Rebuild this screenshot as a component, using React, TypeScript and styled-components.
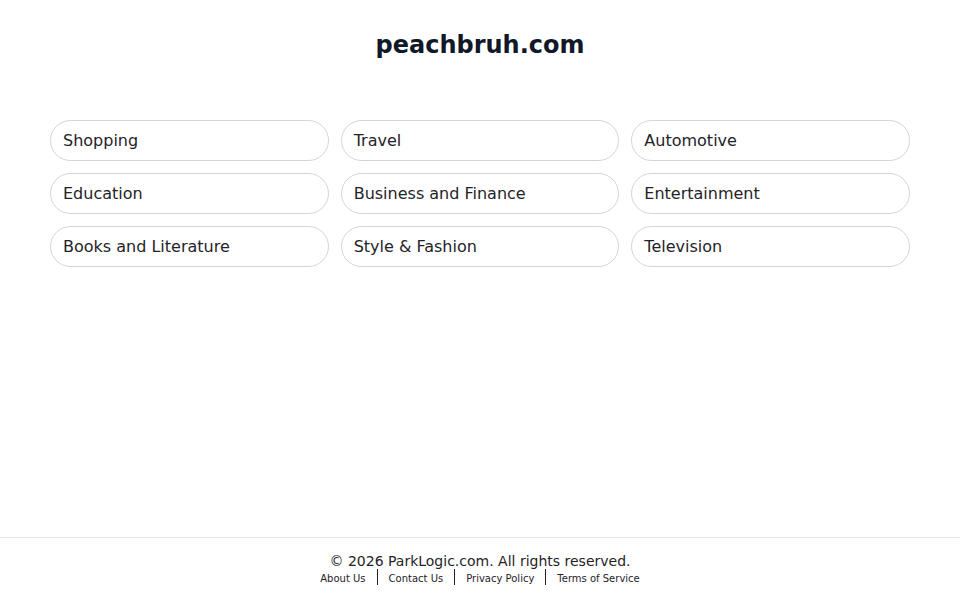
import React from "react";
import styled, { createGlobalStyle } from "styled-components";

const categories = [
  "Shopping",
  "Travel",
  "Automotive",
  "Education",
  "Business and Finance",
  "Entertainment",
  "Books and Literature",
  "Style & Fashion",
  "Television",
];

const links = ["About Us", "Contact Us", "Privacy Policy", "Terms of Service"];

function App() {
  return (
    <>
      <GlobalStyle />
      <Page>
        <Main>
          <Title>peachbruh.com</Title>
          <Grid>
            {categories.map((c) => (
              <Pill key={c} href="#">
                {c}
              </Pill>
            ))}
          </Grid>
        </Main>
        <Footer>
          <Copy>© 2026 ParkLogic.com. All rights reserved.</Copy>
          <LinkRow>
            {links.map((l, i) => (
              <React.Fragment key={l}>
                {i > 0 && <Sep />}
                <FooterLink href="#">{l}</FooterLink>
              </React.Fragment>
            ))}
          </LinkRow>
        </Footer>
      </Page>
    </>
  );
}

export default App;

const GlobalStyle = createGlobalStyle`
  html, body {
    margin: 0;
    padding: 0;
    background: #fff;
    font-family: "DejaVu Sans", Verdana, sans-serif;
  }
`;

const Page = styled.div`
  min-height: 100vh;
  display: flex;
  flex-direction: column;
`;

const Main = styled.main`
  flex: 1;
  width: 860px;
  margin: 0 auto;
  padding-top: 31px;
`;

const Title = styled.h1`
  margin: 0;
  text-align: center;
  font-size: 24px;
  line-height: 29px;
  font-weight: 700;
  color: #111827;
`;

const Grid = styled.div`
  margin-top: 60px;
  display: grid;
  grid-template-columns: repeat(3, 1fr);
  gap: 12px;
`;

const Pill = styled.a`
  display: flex;
  align-items: center;
  height: 41px;
  box-sizing: border-box;
  padding: 0 12px;
  border: 1px solid #d1d5db;
  border-radius: 999px;
  font-size: 16px;
  color: #1f2328;
  text-decoration: none;
`;

const Footer = styled.footer`
  border-top: 1px solid #e5e7eb;
  padding: 15px 0 15px;
  display: flex;
  flex-direction: column;
  align-items: center;
`;

const Copy = styled.p`
  margin: 0;
  font-size: 14px;
  line-height: 17px;
  color: #1f2328;
`;

const LinkRow = styled.div`
  display: flex;
  align-items: center;
  height: 16px;
  margin-top: -1px;
`;

const FooterLink = styled.a`
  font-size: 10px;
  line-height: 14px;
  padding-top: 4px;
  color: #1f2328;
  text-decoration: none;
`;

const Sep = styled.span`
  width: 1px;
  height: 16px;
  background: #1f2328;
  margin: 0 11px;
`;
